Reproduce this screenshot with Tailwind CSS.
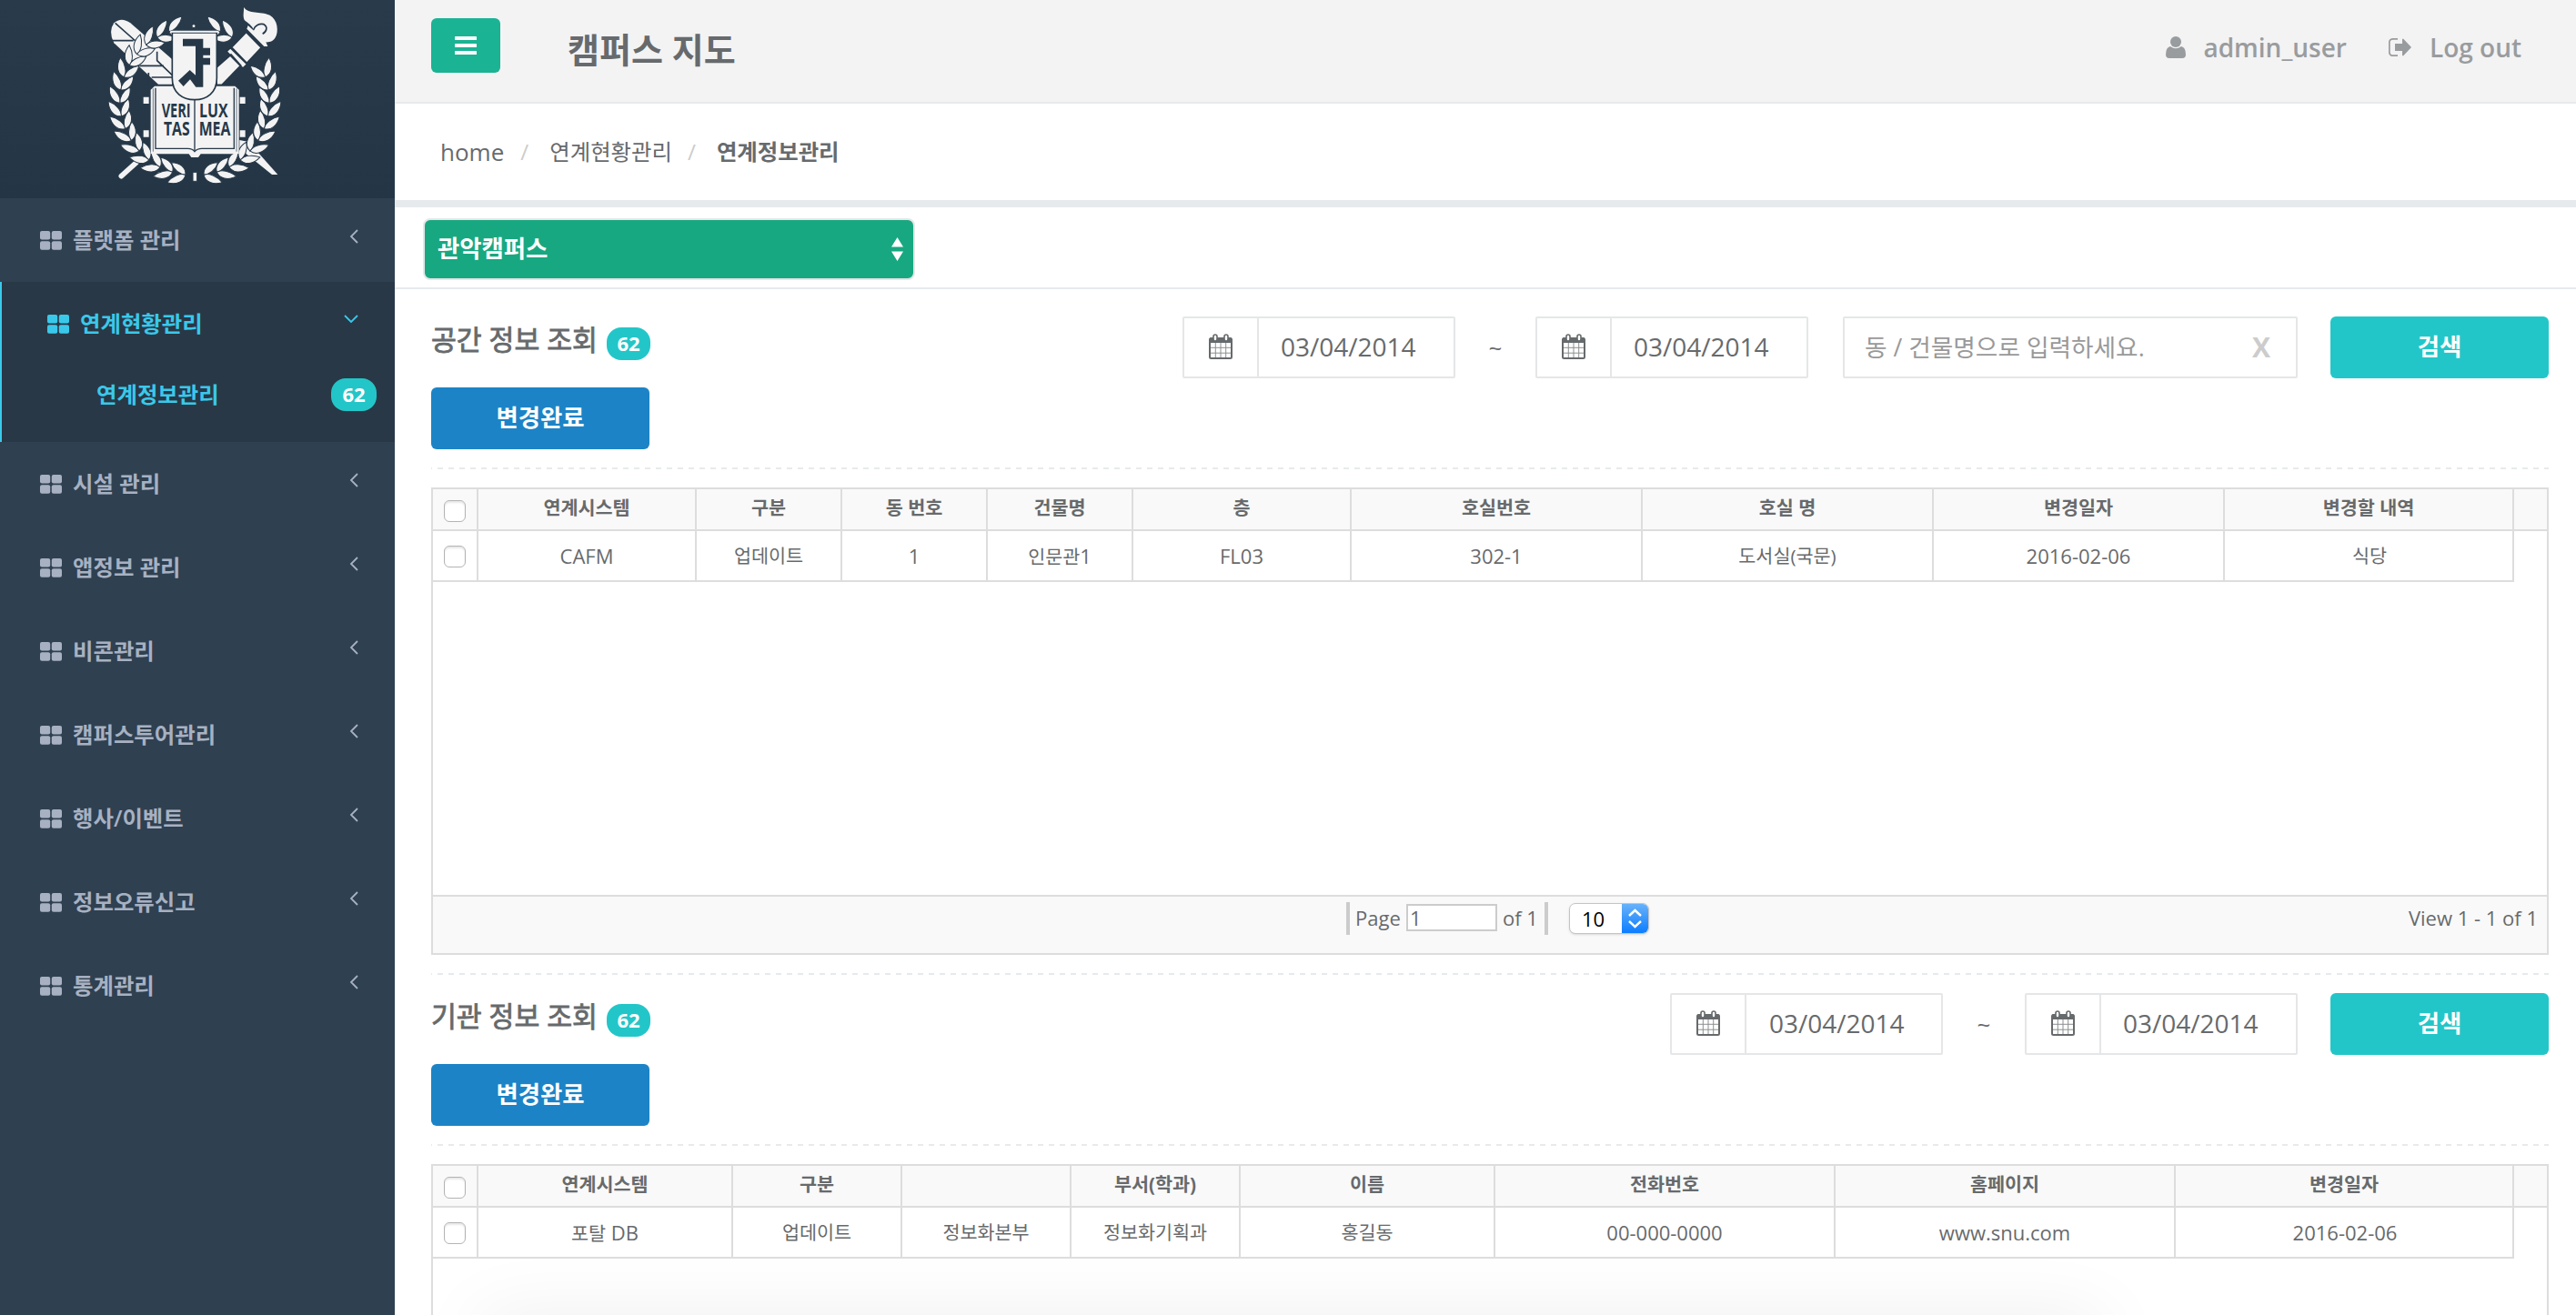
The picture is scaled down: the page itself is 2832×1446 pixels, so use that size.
<!DOCTYPE html>
<html lang="ko">
<head>
<meta charset="utf-8">
<title>캠퍼스 지도</title>
<script src="https://cdn.jsdelivr.net/npm/@tailwindcss/browser@4"></script>
</head>
<body class="relative flex h-[1446px] w-[2832px] overflow-hidden bg-white font-['Open_Sans','Noto_Sans_CJK_KR',sans-serif] text-[#676a6c]">
<svg class="hidden">
  <symbol id="grid" viewBox="0 0 24 21"><g fill="currentColor"><rect width="11.2" height="9.6" rx="2"/><rect x="12.8" width="11.2" height="9.6" rx="2"/><rect y="11.2" width="11.2" height="9.6" rx="2"/><rect x="12.8" y="11.2" width="11.2" height="9.6" rx="2"/></g></symbol>
  <symbol id="left" viewBox="0 0 10 16"><path d="M9 1 2 8l7 7" fill="none" stroke="currentColor" stroke-width="1.8"/></symbol>
  <symbol id="cal" viewBox="0 0 26 28"><rect x="1" y="5" width="24" height="22" rx="1.5" fill="none" stroke="currentColor" stroke-width="2"/><path d="M1 4.5h24V10H1z" fill="currentColor"/><path d="M7.3 10v17M13 10v17M18.700 10v17M1 15.300h24M1 21.200h24" stroke="currentColor" stroke-width="1" opacity=".75"/><rect x="5" y="1" width="4" height="7" rx="2" fill="#fff" stroke="currentColor" stroke-width="1.600"/><rect x="17" y="1" width="4" height="7" rx="2" fill="#fff" stroke="currentColor" stroke-width="1.600"/></symbol>
</svg>

<aside class="flex h-full w-[434px] shrink-0 flex-col bg-[#2f4050] text-[24.400px] font-semibold text-[#a7b1c2]">
  <div class="h-[218px] bg-linear-to-b from-[#293b4b] to-[#243646] pl-[100px]">
    <svg class="h-[215px] w-[230px]" viewBox="0 0 690 645" fill="#f3f3f4" stroke="#263848">
      <path stroke="none" d="M76 76Q100 55 130 76L268 196V278H222L76 142Q56 104 76 76Z"/>
      <path stroke-width="5" d="M80 76 150 138M70 134H140M160 217H240M200 255H268M190 240V278M218 170V200L268 248" fill="none"/>
      <path stroke="none" d="M490 490 597 576H616L520 468 490 462Z"/>
      <path stroke="#f3f3f4" stroke-width="17" stroke-linecap="round" d="M100 581 150 536"/>
      <g id="wreath" stroke-width="3"></g>
      <path stroke-width="5" d="M414 222 462 180 494 216 432 280H414ZM447 170 460 158 515 212 501 225ZM512 106 562 157 514 208 464 156Z"/>
      <path stroke="none" d="M504 24C520 48 556 36 590 50C616 64 620 104 608 124C602 136 588 140 577 139L583 153H571L514 95L518 84L538 102C532 82 516 76 506 66C500 52 505 40 504 24Z"/>
      <path fill="none" stroke-width="5" d="M536 98C540 84 556 76 570 80C584 88 580 104 566 112"/>
      <path stroke="none" d="M173 320h18v22h-18zM491 320h18v22h-18zM173 430h18v22h-18zM491 430h18v22h-18z"/>
      <path stroke="none" d="M197 296 210 284H475L488 296V508H362L354 519H331L323 508H197Z"/>
      <path fill="none" stroke-width="4" d="M213 290V490H320Q335 490 342 500Q350 490 365 490H472V290M342 322V496"/>
      <path fill="none" stroke-width="2" d="M205 292V500M480 292V500"/>
      <path stroke-width="5" d="M268 108H415V258C415 306 382 329 342 329S268 306 268 258Z"/>
      <path stroke="none" d="M262 101H421V107H262Z"/>
      <path fill="#263848" stroke="none" d="M303 128H370V158H393V182H370V191H393V214H370V287H346L327 262 305 285 288 266 326 231 345 248V152H303Z"/>
      <g fill="#263848" stroke="none" font-size="66" font-weight="700" font-family="Open Sans">
        <text x="233" y="387" textLength="96" lengthAdjust="spacingAndGlyphs">VERI</text>
        <text x="357" y="387" textLength="95" lengthAdjust="spacingAndGlyphs">LUX</text>
        <text x="240" y="446" textLength="86" lengthAdjust="spacingAndGlyphs">TAS</text>
        <text x="356" y="446" textLength="104" lengthAdjust="spacingAndGlyphs">MEA</text>
      </g>
    </svg>
  </div>
  <div class="flex h-[92px] items-center pr-[40px] pl-[44px]"><svg class="h-[21px] w-[24px]"><use href="#grid"/></svg><span class="ml-[12px] grow">플랫폼 관리</span><svg class="mb-[8px] h-[16px] w-[10px]"><use href="#left"/></svg></div>
  <div class="h-[176px] border-l-2 border-[#3ac8ea] bg-[#293846] text-[#3ac8ea]">
    <div class="flex h-[92px] items-center pr-[40px] pl-[50px]"><svg class="h-[21px] w-[24px]"><use href="#grid"/></svg><span class="ml-[12px] grow">연계현황관리</span><svg class="mb-[10px] h-[10px] w-[16px]" viewBox="0 0 16 10"><path d="m1 1 7 7 7-7" fill="none" stroke="currentColor" stroke-width="1.800"/></svg></div>
    <div class="flex h-[64px] items-center pr-[20px] pl-[104px]"><span class="grow">연계정보관리</span><span class="h-[36px] w-[50px] rounded-[16px] bg-[#23c6c8] text-center text-[22px] leading-[35px] font-bold text-white">62</span></div>
  </div>
  <div class="flex h-[92px] items-center pr-[40px] pl-[44px]"><svg class="h-[21px] w-[24px]"><use href="#grid"/></svg><span class="ml-[12px] grow">시설 관리</span><svg class="mb-[8px] h-[16px] w-[10px]"><use href="#left"/></svg></div>
  <div class="flex h-[92px] items-center pr-[40px] pl-[44px]"><svg class="h-[21px] w-[24px]"><use href="#grid"/></svg><span class="ml-[12px] grow">앱정보 관리</span><svg class="mb-[8px] h-[16px] w-[10px]"><use href="#left"/></svg></div>
  <div class="flex h-[92px] items-center pr-[40px] pl-[44px]"><svg class="h-[21px] w-[24px]"><use href="#grid"/></svg><span class="ml-[12px] grow">비콘관리</span><svg class="mb-[8px] h-[16px] w-[10px]"><use href="#left"/></svg></div>
  <div class="flex h-[92px] items-center pr-[40px] pl-[44px]"><svg class="h-[21px] w-[24px]"><use href="#grid"/></svg><span class="ml-[12px] grow">캠퍼스투어관리</span><svg class="mb-[8px] h-[16px] w-[10px]"><use href="#left"/></svg></div>
  <div class="flex h-[92px] items-center pr-[40px] pl-[44px]"><svg class="h-[21px] w-[24px]"><use href="#grid"/></svg><span class="ml-[12px] grow">행사/이벤트</span><svg class="mb-[8px] h-[16px] w-[10px]"><use href="#left"/></svg></div>
  <div class="flex h-[92px] items-center pr-[40px] pl-[44px]"><svg class="h-[21px] w-[24px]"><use href="#grid"/></svg><span class="ml-[12px] grow">정보오류신고</span><svg class="mb-[8px] h-[16px] w-[10px]"><use href="#left"/></svg></div>
  <div class="flex h-[92px] items-center pr-[40px] pl-[44px]"><svg class="h-[21px] w-[24px]"><use href="#grid"/></svg><span class="ml-[12px] grow">통계관리</span><svg class="mb-[8px] h-[16px] w-[10px]"><use href="#left"/></svg></div>
</aside>

<main class="flex h-full w-[2398px] flex-col overflow-hidden">
  <header class="flex h-[114px] shrink-0 items-start border-b-2 border-[#e7eaec] bg-[#f3f3f4] pt-[20px] pr-[60px] pl-[40px]">
    <div class="flex h-[60px] w-[76px] items-center justify-center rounded-[6px] bg-[#1ab394]"><svg class="h-[20px] w-[24px]" fill="#fff"><rect width="24" height="4" rx=".6"/><rect y="8" width="24" height="4" rx=".6"/><rect y="16" width="24" height="4" rx=".6"/></svg></div>
    <h1 class="ml-[74px] grow text-[38px] leading-[68px] font-bold">캠퍼스 지도</h1>
    <div class="flex items-center text-[28px] leading-[64px] font-semibold text-[#999c9e]">
      <svg class="h-[24px] w-[22px]" viewBox="0 0 22 24" fill="currentColor"><circle cx="11" cy="6" r="6"/><path d="M5 11Q11 15.500 17 11Q22 12 22 20Q22 24 18 24H4Q0 24 0 20Q0 12 5 11Z"/></svg>
      <span class="ml-[19px]">admin_user</span>
      <svg class="ml-[46px] h-[20px] w-[25px]" viewBox="0 0 25 20"><path d="M10 .8H5Q.8.800.8 5v10Q.800 19.200 5 19.200h5" fill="none" stroke="currentColor" stroke-width="1.700"/><path d="M7 6h8V1l1-.6L25 10l-9 9.600-1-.6v-5H7Z" fill="currentColor"/></svg>
      <span class="ml-[20px]">Log out</span>
    </div>
  </header>
  <nav class="flex h-[114px] shrink-0 items-center border-b-8 border-[#e7eaec] pl-[50px] text-[24.400px]"><span class="text-[26px]">home</span><span class="ml-[18px] w-[32px] text-[#ccc]">/</span><span>연계현황관리</span><span class="ml-[17px] w-[32px] text-[#ccc]">/</span><b>연계정보관리</b></nav>
  <div class="h-[90px] shrink-0 border-b-2 border-[#e7eaec] pt-[12px] pl-[31px]">
    <div class="flex h-[68px] w-[541px] items-center rounded-[8px] border-2 border-[#e5e6e7] bg-[#18a881] pr-[11px] pl-[14px] text-[26.400px] font-semibold text-white"><span class="grow">관악캠퍼스</span><svg class="h-[26px] w-[13px]" fill="#fff"><path d="M6.500 0 13 10.500H0ZM6.500 26 13 15.500H0Z"/></svg></div>
  </div>

  <section class="h-[744px] shrink-0 pr-[30px] pl-[40px]">
    <div class="flex h-[196px] items-start pt-[30px]">
      <div class="grow">
        <div class="flex h-[52px] items-center text-[30.300px]"><span class="[-webkit-text-stroke:0.8px_#676a6c]">공간 정보 조회</span><span class="mt-[8px] ml-[10px] h-[36px] w-[48px] rounded-[16px] bg-[#23c6c8] text-center text-[22px] leading-[35px] font-bold text-white">62</span></div>
        <div class="mt-[26px] h-[68px] w-[240px] rounded-[6px] bg-[#1c84c6] text-center text-[26.400px] leading-[66px] font-semibold text-white">변경완료</div>
      </div>
      <div class="flex h-[68px] text-[28px] leading-[63px]">
        <div class="flex w-[300px] rounded-[2px] border-2 border-[#e5e6e7]"><div class="flex w-[82px] items-center justify-center border-r-2 border-[#e5e6e7]"><svg class="mb-[2px] h-[28px] w-[26px]"><use href="#cal"/></svg></div><span class="ml-[24px]">03/04/2014</span></div>
        <span class="w-[88px] text-center text-[26px] leading-[68px]">~</span>
        <div class="flex w-[300px] rounded-[2px] border-2 border-[#e5e6e7]"><div class="flex w-[82px] items-center justify-center border-r-2 border-[#e5e6e7]"><svg class="mb-[2px] h-[28px] w-[26px]"><use href="#cal"/></svg></div><span class="ml-[24px]">03/04/2014</span></div>
        <div class="ml-[38px] flex w-[500px] rounded-[2px] border-2 border-[#e5e6e7] pr-[28px] pl-[22px] text-[26.700px] text-[#999]"><span class="grow">동 / 건물명으로 입력하세요.</span><b class="text-[30px] font-bold text-[#ccc]">X</b></div>
        <div class="ml-[36px] w-[240px] rounded-[6px] bg-[#23c6c8] text-center text-[26.400px] leading-[67px] font-semibold text-white">검색</div>
      </div>
    </div>
    <svg class="block h-[2px] w-[2328px]"><path d="M-5 1H2328" stroke="#e7eaec" stroke-width="2" stroke-dasharray="6 6"/></svg>
    <div class="mt-[20px] flex h-[514px] flex-col border-2 border-[#ddd]">
      <div class="grid h-[46px] grid-cols-[50px_240px_160px_160px_160px_240px_320px_320px_320px_318px_36px] divide-x-2 divide-[#ddd] border-b-2 border-[#ddd] bg-[#f9f9f9] text-center text-[20.700px] leading-[40px] font-bold">
        <div class="flex justify-center pt-[12px]"><i class="h-[24px] w-[24px] rounded-[6px] border-[1.500px] border-[#b4b4b4] bg-white shadow-[inset_0_2px_2px_#e8e8e8]"></i></div><div>연계시스템</div><div>구분</div><div>동 번호</div><div>건물명</div><div>층</div><div>호실번호</div><div>호실 명</div><div>변경일자</div><div>변경할 내역</div><div></div>
      </div>
      <div class="grid h-[56px] w-[2288px] grid-cols-[50px_240px_160px_160px_160px_240px_320px_320px_320px_318px] divide-x-2 divide-[#ddd] border-r-2 border-b-2 border-[#ddd] text-center text-[22px] leading-[54px]">
        <div class="flex justify-center pt-[16px]"><i class="h-[24px] w-[24px] rounded-[6px] border-[1.500px] border-[#b4b4b4] bg-white shadow-[inset_0_2px_2px_#e8e8e8]"></i></div><div>CAFM</div><div class="text-[20.700px]">업데이트</div><div>1</div><div><span class="text-[20.700px]">인문관</span>1</div><div>FL03</div><div>302-1</div><div class="text-[20.700px]">도서실(국문)</div><div>2016-02-06</div><div class="text-[20.700px]">식당</div>
      </div>
      <div class="grow"></div>
      <div class="flex h-[64px] items-start border-t-2 border-[#ddd] bg-[#f9f9f9] pt-[6px] pr-[10px] text-[22px] leading-[35px]">
        <div class="ml-[1004px] h-[36px] w-[4px] bg-[#ccc]"></div>
        <span class="ml-[6px] w-[56px]">Page</span>
        <span class="mt-[2px] h-[30px] w-[100px] border-2 border-[#ccc] bg-white pl-[2px] leading-[27px]">1</span>
        <span class="ml-[6px] w-[46px] whitespace-nowrap">of 1</span>
        <div class="h-[36px] w-[4px] bg-[#ccc]"></div>
        <div class="mt-[1px] ml-[23px] flex h-[34px] w-[88px] overflow-hidden rounded-[7px] border border-[#c4c4c4] bg-white text-black shadow-sm"><span class="w-[58px] pl-[13px] leading-[32px]">10</span><svg class="h-[34px] w-[29px]"><defs><linearGradient id="b" x2="0" y2="1"><stop stop-color="#6bb3fa"/><stop offset="1" stop-color="#067aff"/></linearGradient></defs><path d="M0-1H29V34H0Z" fill="url(#b)"/><path d="m8 13 6.500-6 6.500 6M8 19l6.500 6 6.500-6" fill="none" stroke="#fff" stroke-width="2.400"/></svg></div>
        <span class="grow text-right">View 1 - 1 of 1</span>
      </div>
    </div>
  </section>

  <section class="flex grow flex-col pr-[30px] pl-[40px]">
    <svg class="mt-[8px] block h-[2px] w-[2328px] shrink-0"><path d="M-5 1H2328" stroke="#e7eaec" stroke-width="2" stroke-dasharray="6 6"/></svg>
    <div class="flex h-[186px] shrink-0 items-start pt-[20px]">
      <div class="grow">
        <div class="flex h-[52px] items-center text-[30.300px]"><span class="[-webkit-text-stroke:0.8px_#676a6c]">기관 정보 조회</span><span class="mt-[8px] ml-[10px] h-[36px] w-[48px] rounded-[16px] bg-[#23c6c8] text-center text-[22px] leading-[35px] font-bold text-white">62</span></div>
        <div class="mt-[26px] h-[68px] w-[240px] rounded-[6px] bg-[#1c84c6] text-center text-[26.400px] leading-[66px] font-semibold text-white">변경완료</div>
      </div>
      <div class="flex h-[68px] text-[28px] leading-[63px]">
        <div class="flex w-[300px] rounded-[2px] border-2 border-[#e5e6e7]"><div class="flex w-[82px] items-center justify-center border-r-2 border-[#e5e6e7]"><svg class="mb-[2px] h-[28px] w-[26px]"><use href="#cal"/></svg></div><span class="ml-[25px]">03/04/2014</span></div>
        <span class="w-[90px] text-center text-[26px] leading-[68px]">~</span>
        <div class="flex w-[300px] rounded-[2px] border-2 border-[#e5e6e7]"><div class="flex w-[82px] items-center justify-center border-r-2 border-[#e5e6e7]"><svg class="mb-[2px] h-[28px] w-[26px]"><use href="#cal"/></svg></div><span class="ml-[24px]">03/04/2014</span></div>
        <div class="ml-[36px] w-[240px] rounded-[6px] bg-[#23c6c8] text-center text-[26.400px] leading-[67px] font-semibold text-white">검색</div>
      </div>
    </div>
    <svg class="block h-[2px] w-[2328px] shrink-0"><path d="M-5 1H2328" stroke="#e7eaec" stroke-width="2" stroke-dasharray="6 6"/></svg>
    <div class="mt-[20px] flex grow flex-col border-2 border-b-0 border-[#ddd]">
      <div class="grid h-[46px] shrink-0 grid-cols-[50px_280px_186px_186px_186px_280px_374px_374px_372px_36px] divide-x-2 divide-[#ddd] border-b-2 border-[#ddd] bg-[#f9f9f9] text-center text-[20.700px] leading-[40px] font-bold">
        <div class="flex justify-center pt-[12px]"><i class="h-[24px] w-[24px] rounded-[6px] border-[1.500px] border-[#b4b4b4] bg-white shadow-[inset_0_2px_2px_#e8e8e8]"></i></div><div>연계시스템</div><div>구분</div><div></div><div>부서(학과)</div><div>이름</div><div>전화번호</div><div>홈페이지</div><div>변경일자</div><div></div>
      </div>
      <div class="grid h-[56px] w-[2288px] shrink-0 grid-cols-[50px_280px_186px_186px_186px_280px_374px_374px_372px] divide-x-2 divide-[#ddd] border-r-2 border-b-2 border-[#ddd] text-center text-[22px] leading-[54px]">
        <div class="flex justify-center pt-[16px]"><i class="h-[24px] w-[24px] rounded-[6px] border-[1.500px] border-[#b4b4b4] bg-white shadow-[inset_0_2px_2px_#e8e8e8]"></i></div><div><span class="text-[20.700px]">포탈</span> DB</div><div class="text-[20.700px]">업데이트</div><div class="text-[20.700px]">정보화본부</div><div class="text-[20.700px]">정보화기획과</div><div class="text-[20.700px]">홍길동</div><div>00-000-0000</div><div>www.snu.com</div><div>2016-02-06</div>
      </div>
    </div>
  </section>
</main>
<div class="absolute right-0 bottom-0 left-[434px] h-[90px] overflow-hidden"><div class="mt-[98px] ml-[96px] h-[40px] w-[1780px] shadow-[0_0_80px_rgba(0,0,0,0.1)]"></div></div>

<script>
// Laurel wreath: pairs of leaves along a circular stem, mirrored left and right
var out = '', leaf = 'M0 0C14 -20 42 -20 66 0C42 13 14 12 0 0Z', leafIn = 'M0 0C14 19 40 19 62 0C40 -13 14 -12 0 0Z';
for (var side = 0; side < 2; side++) {
  out += side ? '<g transform="translate(684 0) scale(-1 1)">' : '<g>';
  for (var i = 0; i < 16; i++) {
    var a = 97 + i * 10.2;
    if (side && a > 205 && a < 236) continue;
    var r = a * Math.PI / 180, x = 342 + 246 * Math.cos(r), y = 334 + 244 * Math.sin(r);
    out += '<g transform="translate(' + x.toFixed(1) + ' ' + y.toFixed(1) + ') rotate(' + (a + 95) + ')"><path transform="rotate(-35)" d="' + leaf + '"/><path transform="rotate(28)" d="' + leafIn + '"/></g>';
  }
  out += '</g>';
}
document.getElementById('wreath').innerHTML = out + '<circle cx="339" cy="86" r="6"/><path d="M336 568h14v30h-14z"/>';
</script>
</body>
</html>
